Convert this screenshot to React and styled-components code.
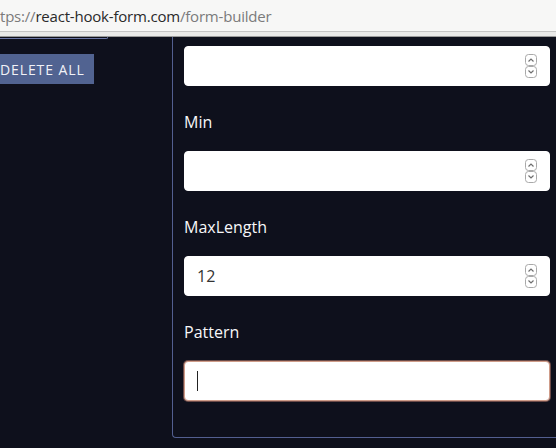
import React from "react";
import styled, { createGlobalStyle } from "styled-components";

const GlobalStyle = createGlobalStyle`
  html, body {
    margin: 0;
    padding: 0;
    background: #0e101c;
  }
  body {
    font-family: "Open Sans", "Noto Sans", sans-serif;
    overflow: hidden;
  }
`;

const Page = styled.div`
  width: 556px;
  height: 448px;
  display: flex;
  flex-direction: column;
  overflow: hidden;
`;

const AddressBar = styled.div`
  height: 31px;
  background: #f7f7f6;
  border-bottom: 1px solid #c4c4c4;
  display: flex;
  align-items: center;
  white-space: nowrap;
  font-size: 15px;
  letter-spacing: -0.2px;
  color: #7b7b7b;
  overflow: hidden;
`;

const Url = styled.span`
  b {
    font-weight: 400;
    color: #2a2a2a;
  }
`;

const Strip = styled.div`
  height: 4px;
  background: #e9e9e8;
  border-bottom: 1px solid #9a9a9a;
`;

const Main = styled.div`
  flex: 1;
  display: flex;
  align-items: flex-start;
`;

const LeftCol = styled.div`
  width: 172px;
  flex-shrink: 0;
  display: flex;
  flex-direction: column;
  align-items: flex-start;
`;

const ClippedBox = styled.div`
  width: 107px;
  height: 1px;
  border-bottom: 1px solid #6a75a3;
  border-right: 1px solid #6a75a3;
  border-bottom-right-radius: 3px;
`;

const DeleteButton = styled.button`
  margin-top: 15px;
  margin-left: -12px;
  height: 30px;
  padding: 0 9px 0 12px;
  border: none;
  background: #516391;
  color: #f1f2f7;
  font-family: "Open Sans", "Noto Sans", sans-serif;
  font-size: 14px;
  letter-spacing: 0.9px;
  text-transform: uppercase;
`;

const Panel = styled.form`
  width: 420px;
  flex-shrink: 0;
  margin: 0;
  padding: 9px 0 36px 11px;
  border-left: 1px solid #535f90;
  border-bottom: 1px solid #535f90;
  border-bottom-left-radius: 4px;
`;

const Label = styled.label`
  display: block;
  margin: 20px 0 13px;
  line-height: 32px;
  font-size: 16px;
  color: #f7f7f9;
`;

const Field = styled.div`
  box-sizing: border-box;
  width: 366px;
  height: 40px;
  display: flex;
  align-items: center;
  padding: 0 11px 0 12px;
  background: #fff;
  border-radius: 4px;
  border: 1px solid ${(p) => (p.$focused ? "#cf9c89" : "#fff")};
  box-shadow: ${(p) => (p.$focused ? "0 0 0 1px #6b4a48" : "none")};
`;

const NumberInput = styled.input`
  flex: 1;
  min-width: 0;
  border: none;
  outline: none;
  padding: 0;
  background: transparent;
  font-family: "Open Sans", "Noto Sans", sans-serif;
  font-size: 16px;
  color: #333;
  -moz-appearance: textfield;
  &::-webkit-inner-spin-button,
  &::-webkit-outer-spin-button {
    -webkit-appearance: none;
    margin: 0;
  }
`;

const Caret = styled.span`
  width: 1px;
  height: 20px;
  background: #222;
`;

function Spinner() {
  return (
    <svg width="13" height="24" viewBox="0 0 13 24">
      <rect x="0.5" y="0.5" width="11" height="11" rx="3" fill="#fff" stroke="#a9a9a9" />
      <rect x="0.5" y="12.5" width="11" height="11" rx="3" fill="#fff" stroke="#a9a9a9" />
      <path d="M3.5 7.5 L6 5 L8.5 7.5" fill="none" stroke="#6f6f6f" strokeWidth="1.2" />
      <path d="M3.5 16.5 L6 19 L8.5 16.5" fill="none" stroke="#6f6f6f" strokeWidth="1.2" />
    </svg>
  );
}

function NumberField({ value }) {
  return (
    <Field>
      <NumberInput type="number" defaultValue={value} />
      <Spinner />
    </Field>
  );
}

export default function App() {
  return (
    <Page>
      <GlobalStyle />
      <AddressBar>
        <Url>
          tps://<b>react-hook-form.com</b>/form-builder
        </Url>
      </AddressBar>
      <Strip />
      <Main>
        <LeftCol>
          <ClippedBox />
          <DeleteButton type="button">Delete all</DeleteButton>
        </LeftCol>
        <Panel onSubmit={(e) => e.preventDefault()}>
          <NumberField />
          <Label>Min</Label>
          <NumberField />
          <Label>MaxLength</Label>
          <NumberField value={12} />
          <Label>Pattern</Label>
          <Field $focused>
            <Caret />
          </Field>
        </Panel>
      </Main>
    </Page>
  );
}
